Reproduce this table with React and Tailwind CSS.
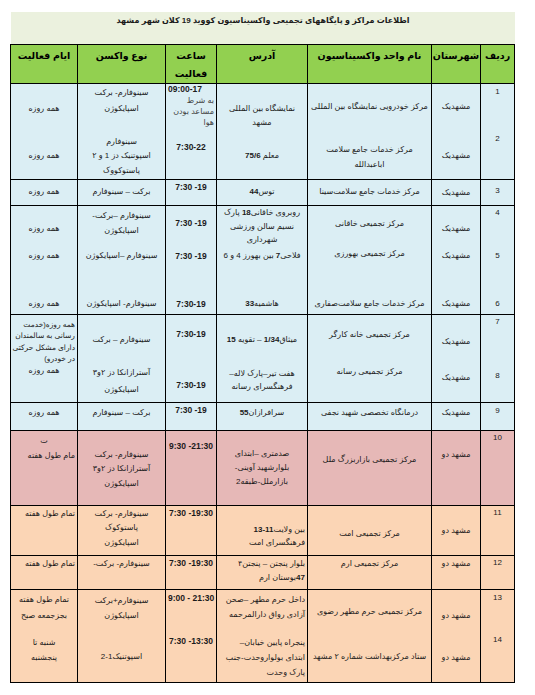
import React from "react";

const blue = "bg-[#dbeef4]";
const pink = "bg-[#e6b8b7]";
const peach = "bg-[#fbd5b5]";

// ** ** marks the bold (latin digit) parts
function Rich({ s }) {
    const parts = s.split("**");
    return parts.map((p, i) => (i % 2 ? <b key={i} className="font-bold">{p}</b> : <span key={i}>{p}</span>));
}

const rows = [
    {
        h: 47, bg: blue, top: true, c: [
            ["1", 1], ["مشهدیک", 16], ["مرکز خودرویی نمایشگاه بین المللی", 16], ["نمایشگاه بین المللی\nمشهد", 18, 14],
            ["09:00-17", 0, 11, "", (
                <>
                    <div dir="ltr" className="font-bold text-[8.5px]">09:00-17</div>
                    <div className="text-[#444]">به شرط</div>
                    <div className="text-[#444]">مساعد بودن</div>
                    <div className="text-[#444]">هوا</div>
                </>
            )],
            ["سینوفارم- برکت\nاسپایکوژن", 1, 16], ["همه روزه", 18],
        ]
    },
    {
        h: 49, bg: blue, c: [
            ["2", 1], ["مشهدیک", 18], ["مرکز خدمات جامع سلامت\nاباعبدالله", 11, 15], ["معلم **75/6**", 18],
            ["7:30-22", 9], ["سینوفارم\nاسپوتنیک دز 1 و ۲\nپاستوکووک", 4, 14.5], ["همه روزه", 18],
        ]
    },
    {
        h: 26, bg: blue, top: true, c: [
            ["3", 4], ["مشهدیک", 6], ["مرکز خدمات جامع سلامت‌سینا", 5], ["توس**44**", 5],
            ["7:30 -19", 0], ["برکت – سینوفارم", 5], ["همه روزه", 5],
        ]
    },
    {
        h: 40, bg: blue, top: true, c: [
            ["4", 0], ["مشهدیک", 16], ["مرکز تجمیعی خاقانی", 11], ["روبروی خاقانی**18** پارک\nنسیم سالن ورزشی\nشهرداری", 0, 13.5],
            ["7:30 -19", 10], ["سینوفارم –برکت-\nاسپایکوژن", 2, 15], ["همه روزه", 16],
        ]
    },
    {
        h: 40, bg: blue, c: [
            ["5", 2], ["مشهدیک", 2], ["مرکز تجمیعی بهورزی", 0], ["فلاحی**7** بین بهورز 4 و 6", 2],
            ["7:30 -19", 2], ["سینوفارم –اسپایکوژن", 2], ["همه روزه", 2],
        ]
    },
    {
        h: 28, bg: blue, c: [
            ["6", 10], ["مشهدیک", 10], ["مرکز خدمات جامع سلامت‌صفاری", 10], ["هاشمیه**33**", 10],
            ["7:30-19", 10], ["سینوفارم- اسپایکوژن", 10], ["همه روزه", 10],
        ]
    },
    {
        h: 49, bg: blue, top: true, c: [
            ["7", 0], ["مشهدیک", 20], ["مرکز تجمیعی خانه کارگر", 13], ["میثاق**1/34** – تقویه **15**", 18],
            ["7:30-19", 12], ["سینوفارم – برکت", 18],
            ["", 4, 11.3, "", (
                <div className="text-[7.5px]">
                    <div>همه روزه(خدمت</div>
                    <div>رسانی به سالمندان</div>
                    <div>دارای مشکل حرکتی</div>
                    <div>در خودرو)</div>
                </div>
            )],
        ]
    },
    {
        h: 38, bg: blue, c: [
            ["8", 5], ["مشهدیک", 7], ["مرکز تجمیعی رسانه", 1], ["هفت تیر–پارک لاله–\nفرهنگسرای رسانه", 3, 13],
            ["7:30-19", 14], ["آسترازانکا دز ۲و۳\nاسپایکوژن", 0, 17], ["همه روزه", 0],
        ]
    },
    {
        h: 28, bg: blue, top: true, c: [
            ["9", 1], ["مشهدیک", 3], ["درمانگاه تخصصی شهید نجفی", 3], ["سرافرازان**55**", 3],
            ["7:30 -19", 0], ["برکت – سینوفارم", 3], ["همه روزه", 3],
        ]
    },
    {
        h: 75, bg: pink, top: true, c: [
            ["10", 0], ["مشهد دو", 17], ["مرکز تجمیعی بازاربزرگ ملل", 22], ["صدمتری –ابتدای\nبلوارشهید آوینی-\nبازارملل-طبقه2", 16, 14],
            ["9:30 -21:30", 8], ["سینوفارم- برکت\nآسترازانکا دز ۲و۳\nاسپایکوژن", 17, 14.5],
            ["", 2, 15, "", (
                <>
                    <div className="text-center">ت</div>
                    <div className="text-right">مام طول هفته</div>
                </>
            )],
        ]
    },
    {
        h: 50, bg: peach, top: true, c: [
            ["11", 0], ["مشهد دو", 18], ["مرکز تجمیعی امت", 21], ["بین ولایت**11-13**\nفرهنگسرای امت", 17, 13, "text-right"],
            ["7:30 -19:30", 0], ["سینوفارم- برکت\nپاستوکوک\nاسپایکوژن", 1, 14.5], ["تمام طول هفته", 1, 14, "text-right"],
        ]
    },
    {
        h: 34, bg: peach, top: true, c: [
            ["12", 0], ["مشهد دو", 1], ["مرکز تجمیعی ارم", 1], ["بلوار پنجتن – پنجتن۴\n**47**بوستان ارم", 1, 14, "text-right"],
            ["7:30 -19:30", 0], ["سینوفارم- برکت-", 1], ["تمام طول هفته", 1, 14, "text-right"],
        ]
    },
    {
        h: 43, bg: peach, top: true, c: [
            ["13", 1], ["مشهد دو", 19], ["مرکز تجمیعی حرم مطهر رضوی", 15], ["داخل حرم مطهر –صحن\nآزادی رواق دارالمرحمه", 2, 15, "text-right"],
            ["9:00 - 21:30", 1], ["سینوفارم+برکت\nاسپایکوژن", 3, 15], ["تمام طول هفته\nبجزجمعه صبح", 2, 16],
        ]
    },
    {
        h: 50, bg: peach, c: [
            ["14", 1], ["مشهد دو", 19], ["ستاد مرکزبهداشت شماره ۲ مشهد", 18], ["پنجراه پایین خیابان–\nابتدای بولواروحدت-جنب\nپارک وحدت", 3, 15, "text-right"],
            ["7:30 -13:30", 2], ["اسپوتنیک1-2", 18], ["شنبه تا\nپنجشنبه", 3, 15],
        ]
    },
];

const headers = ["ردیف", "شهرستان", "نام واحد واکسیناسیون", "آدرس", "ساعت\nفعالیت", "نوع واکسن", "ایام فعالیت"];

function Cell({ cell, col }) {
    const [t, pt, lh = 14, al = "text-center", node] = cell;
    const isTime = col === 4;
    return (
        <td className="border-x border-black align-top p-0 overflow-hidden">
            <div className={`${al} px-[2px] whitespace-nowrap`} style={{ paddingTop: pt, lineHeight: `${lh}px` }}>
                {node ? node : t.split("\n").map((line, i) => (
                    <div key={i} dir={isTime ? "ltr" : undefined} className={isTime ? "font-bold text-center text-[8.5px]" : ""}>
                        <Rich s={line} />
                    </div>
                ))}
            </div>
        </td>
    );
}

export default function App() {
    return (
        <div className="w-[535px] h-[695px] bg-white pt-[12px] pl-[11px] text-[#1b1b1b]" style={{ fontFamily: '"Liberation Sans", "DejaVu Sans", sans-serif' }}>
            <div dir="rtl" className="w-[504px]">
                {/* title band */}
                <div className="h-[32px] bg-[#ebf1de] text-center text-[8px] font-bold leading-[16px] pt-[1px]">
                    اطلاعات مراکز و پایگاههای تجمیعی واکسیناسیون کووید 19 کلان شهر مشهد
                </div>
                <table className="w-[504px] table-fixed border-collapse text-[8px]">
                    <colgroup>
                        <col className="w-[34px]" />
                        <col className="w-[49px]" />
                        <col className="w-[124px]" />
                        <col className="w-[91px]" />
                        <col className="w-[51px]" />
                        <col className="w-[88px]" />
                        <col className="w-[67px]" />
                    </colgroup>
                    <thead>
                        <tr className="h-[39px] bg-[#92d050] border border-black">
                            {headers.map((h, i) => (
                                <th key={i} className="border-x border-black align-top p-0 font-bold text-[9.5px]">
                                    <div className="pt-[2px] leading-[18px] text-black whitespace-nowrap">
                                        {h.split("\n").map((l, j) => <div key={j}>{l}</div>)}
                                    </div>
                                </th>
                            ))}
                        </tr>
                    </thead>
                    <tbody>
                        {rows.map((r, i) => (
                            <tr key={i} className={`${r.bg} ${r.top ? "border-t border-black" : ""} ${i === rows.length - 1 ? "border-b border-black" : ""}`} style={{ height: r.h }}>
                                {r.c.map((cell, j) => <Cell key={j} cell={cell} col={j} />)}
                            </tr>
                        ))}
                    </tbody>
                </table>
            </div>
        </div>
    );
}
